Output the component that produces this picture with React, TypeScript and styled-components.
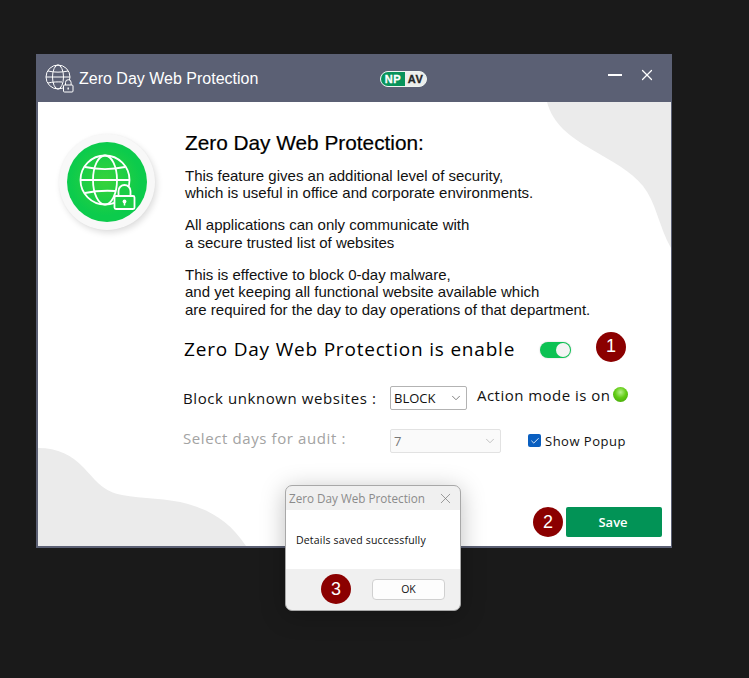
import React from "react";
import styled, { createGlobalStyle } from "styled-components";
import { ChevronDown, Check, X } from "lucide-react";

const Global = createGlobalStyle`
  html, body { margin: 0; padding: 0; background: #1a1a1a; }
  body { font-family: "Liberation Sans", Arial, sans-serif; }
`;

const Page = styled.div`
  position: relative;
  width: 749px;
  height: 678px;
  box-sizing: border-box;
  padding: 54px 0 0 36px;
  background: #1a1a1a;
  overflow: hidden;
`;

const Window = styled.section`
  width: 636px;
  height: 494px;
  box-sizing: border-box;
  border: solid #5b6074;
  border-width: 0 1px 2px 2px;
  display: flex;
  flex-direction: column;
  background: #fff;
`;

const TitleBar = styled.header`
  height: 48px;
  flex: none;
  margin-left: -2px;
  margin-right: -1px;
  background: #5b6074;
  display: flex;
  align-items: center;
  padding: 0 16px 0 9px;
  color: #fff;
`;

const TitleIcon = styled.svg`
  width: 29px;
  height: 29px;
  flex: none;
`;

const TitleText = styled.div`
  font-size: 16px;
  margin-left: 5px;
  margin-top: 2px;
  width: 301px;
  flex: none;
`;

const Logo = styled.div`
  display: flex;
  width: 47px;
  height: 16px;
  box-sizing: border-box;
  border: 1px solid #f0f5f1;
  border-radius: 8px;
  overflow: hidden;
  background: #eceeec;
  font-weight: 700;
  font-size: 11px;
  line-height: 14px;
  letter-spacing: 0.5px;
  -webkit-text-stroke: 0.3px currentColor;
  flex: none;
  margin-top: 2px;
`;

const LogoNP = styled.span`
  flex: 0 0 24px;
  background: #07935a;
  color: #fff;
  text-align: center;
`;

const LogoAV = styled.span`
  flex: 1;
  color: #262626;
  text-align: center;
`;

const WindowButtons = styled.div`
  margin-left: auto;
  display: flex;
  align-items: center;
  gap: 16px;
  margin-top: -7px;
`;

const MinLine = styled.span`
  display: block;
  width: 14px;
  height: 2px;
  background: #fff;
`;

const Content = styled.main`
  position: relative;
  flex: 1;
  display: flex;
  flex-direction: column;
  overflow: hidden;
`;

const Blob = styled.svg`
  position: absolute;
  fill: #ebebeb;
`;

const Intro = styled.div`
  position: relative;
  display: flex;
  padding: 29px 0 0 21px;
`;

const Badge = styled.div`
  width: 96px;
  height: 96px;
  margin-top: 3px;
  border-radius: 50%;
  background: #f8f8f8;
  box-shadow: 2px 3px 6px rgba(0, 0, 0, 0.13), 0 0 2px rgba(0, 0, 0, 0.04);
  display: flex;
  align-items: center;
  justify-content: center;
  flex: none;
`;

const GreenDisc = styled.div`
  width: 80px;
  height: 80px;
  border-radius: 50%;
  background: radial-gradient(circle at 48% 48%, #37d33a 0%, #0ccb4c 60%);
`;

const Copy = styled.div`
  margin-left: 30px;
  color: #111;
  font-size: 15px;
  line-height: 17.5px;
`;

const Heading = styled.h1`
  margin: 0 0 11.6px;
  font-size: 20.8px;
  line-height: 24px;
  font-weight: 400;
  color: #000;
  -webkit-text-stroke: 0.2px #000;
`;

const Para = styled.p`
  margin: 0 0 14.5px;
`;

const Controls = styled.div`
  position: relative;
  padding-left: 145px;
  font-family: "Open Sans", sans-serif;
`;

const EnableRow = styled.div`
  display: flex;
  align-items: center;
  height: 32px;
  margin-top: 1.9px;
`;

const EnableLabel = styled.div`
  font-size: 19px;
  letter-spacing: 0.8px;
  color: #000;
  margin: 0 0 2px 1px;
  width: 356px;
  flex: none;
`;

const Toggle = styled.div`
  width: 31px;
  height: 16px;
  border-radius: 8px;
  background: #0cc253;
  position: relative;
  flex: none;
  box-shadow: 0 0 2px rgba(0, 0, 0, 0.2);
  &::after {
    content: "";
    position: absolute;
    right: 1px;
    top: 1px;
    width: 14px;
    height: 14px;
    border-radius: 50%;
    background: #f4f4f4;
  }
`;

const NumberDot = styled.div`
  width: 30px;
  height: 30px;
  border-radius: 50%;
  background: #8b0000;
  color: #fff;
  font-family: "Liberation Sans", Arial, sans-serif;
  font-size: 18px;
  display: flex;
  align-items: center;
  justify-content: center;
  flex: none;
`;

const EnableDot = styled(NumberDot)`
  margin-left: 25px;
  margin-bottom: 7px;
`;

const BlockRow = styled.div`
  display: flex;
  align-items: center;
  height: 24px;
  margin-top: 19.5px;
`;

const AuditRow = styled.div`
  display: flex;
  align-items: center;
  height: 24px;
  margin-top: 19px;
`;

const FieldLabel = styled.div<{ $muted?: boolean }>`
  width: 207px;
  flex: none;
  font-size: 15px;
  letter-spacing: ${(p) => (p.$muted ? "0.6px" : "0.58px")};
  color: ${(p) => (p.$muted ? "#a3a3a3" : "#111")};
  position: relative;
  top: ${(p) => (p.$muted ? "-3px" : "0")};
`;

const SelectBox = styled.div<{ $w: number; $off?: boolean }>`
  width: ${(p) => p.$w}px;
  height: 24px;
  box-sizing: border-box;
  border: 1px solid ${(p) => (p.$off ? "#e2e2e2" : "#b3b3b3")};
  border-radius: 2px;
  display: flex;
  align-items: center;
  justify-content: space-between;
  padding: 0 3px 0 3px;
  font-size: 13px;
  color: ${(p) => (p.$off ? "#777" : "#111")};
  background: ${(p) => (p.$off ? "#fafafa" : "#fff")};
  flex: none;
`;

const ActionText = styled.div`
  margin-left: 10px;
  font-size: 15px;
  letter-spacing: 0.47px;
  color: #111;
  position: relative;
  top: -3px;
  white-space: nowrap;
`;

const Led = styled.span`
  width: 15px;
  height: 15px;
  border-radius: 50%;
  margin-left: 3px;
  position: relative;
  top: -3px;
  flex: none;
  background: radial-gradient(circle at 50% 35%, #b6f08a 0%, #62cc14 45%, #3f9f08 100%);
`;

const CheckBox = styled.span`
  width: 13px;
  height: 13px;
  border-radius: 2px;
  background: #0a5fc0;
  margin-left: 27px;
  display: flex;
  align-items: center;
  justify-content: center;
  flex: none;
`;

const CheckLabel = styled.span`
  margin-left: 4px;
  font-size: 13px;
  letter-spacing: 0.5px;
  color: #111;
  white-space: nowrap;
`;

const Footer = styled.div`
  position: relative;
  margin-top: auto;
  display: flex;
  justify-content: flex-end;
  align-items: center;
  gap: 3px;
  padding: 0 9px 9px 0;
`;

const SaveButton = styled.button`
  width: 96px;
  height: 30px;
  border: 0;
  border-radius: 2px;
  background: #029356;
  color: #fff;
  font-family: "Open Sans", sans-serif;
  font-size: 13px;
  font-weight: 600;
  padding: 0 2px 0 0;
`;

const Dialog = styled.div`
  position: absolute;
  left: 285px;
  top: 485px;
  width: 176px;
  height: 126px;
  box-sizing: border-box;
  border: 1px solid #a8a8a8;
  border-radius: 7px;
  background: #f0f0f0;
  box-shadow: 0 4px 24px rgba(0, 0, 0, 0.25);
  overflow: hidden;
  display: flex;
  flex-direction: column;
`;

const DialogTitle = styled.div`
  height: 24px;
  flex: none;
  display: flex;
  align-items: center;
  justify-content: space-between;
  padding: 0 6px 0 3px;
  font-family: "Open Sans", sans-serif;
  font-size: 11.7px;
  color: #8b8b8b;
`;

const DialogBody = styled.div`
  height: 59px;
  flex: none;
  box-sizing: border-box;
  background: #fff;
  padding-left: 10px;
  display: flex;
  align-items: center;
  padding-top: 1px;
  font-family: "Open Sans", sans-serif;
  font-size: 10.5px;
  letter-spacing: 0.18px;
  color: #111;
`;

const DialogFooter = styled.div`
  flex: 1;
  display: flex;
  align-items: center;
  padding: 0 0 1px 35px;
`;

const OkButton = styled.button`
  width: 73px;
  height: 21px;
  margin-left: 21px;
  border: 1px solid #d0d0d0;
  border-radius: 4px;
  background: #fdfdfd;
  color: #111;
  font-family: "Open Sans", sans-serif;
  font-size: 10.5px;
  padding: 0;
`;

const GlobeLock = () => (
  <svg width={80} height={80} viewBox="0 0 80 80" fill="none" stroke="#fff" strokeWidth={1.8}>
    <circle cx="38" cy="38" r="24.5" />
    <ellipse cx="38" cy="38" rx="12" ry="24.5" />
    <path d="M18 25c12 2.5 28 2.5 40 0M18 51c12-2.5 22-2.5 30-2" />
    <path d="M13.5 38h49" />
    <path d="M51.5 54v-5a6 6 0 0 1 12 0v5" fill="#1ccd45" />
    <rect x="47.5" y="54" width="20" height="13" rx="1.5" fill="#1ccd45" />
    <circle cx="57.5" cy="59.5" r="1.9" fill="#fff" stroke="none" />
    <path d="M57.5 60v3.5" strokeWidth="1.5" />
  </svg>
);

export default function App() {
  return (
    <Page>
      <Global />
      <Window>
        <TitleBar>
          <TitleIcon viewBox="0 0 29 29" fill="none" stroke="#fff" strokeWidth="1">
            <circle cx="13" cy="13" r="12" />
            <ellipse cx="13" cy="13" rx="5.5" ry="12" />
            <path d="M3 7c6 1.5 14 1.5 20 0M1 13h24M3 19c5-1.2 10-1.2 14-1" />
            <path d="M20.5 21v-2.5a2.8 2.8 0 0 1 5.6 0V21" fill="#5b6074" />
            <rect x="18.5" y="21" width="9.5" height="7" rx="1" fill="#5b6074" />
            <path d="M23.2 23.5v2" strokeWidth="1.4" />
          </TitleIcon>
          <TitleText>Zero Day Web Protection</TitleText>
          <Logo>
            <LogoNP>NP</LogoNP>
            <LogoAV>AV</LogoAV>
          </Logo>
          <WindowButtons>
            <MinLine />
            <X size={18} color="#fff" strokeWidth={1.6} />
          </WindowButtons>
        </TitleBar>
        <Content>
          <Blob style={{ right: 0, top: 0 }} width="124" height="146" viewBox="0 0 124 146">
            <path d="M0 0C6 22 22 34 44 47C66 60 84 69 96 84C109 100 112 125 124 146V0Z" />
          </Blob>
          <Blob style={{ left: 0, bottom: 0 }} width="208" height="98" viewBox="0 0 208 98">
            <path d="M0 0C20 0 34 7 46 20C58 33 66 44 84 47C104 51 130 50 150 56C174 63 192 74 208 98H0Z" />
          </Blob>
          <Intro>
            <Badge>
              <GreenDisc>
                <GlobeLock />
              </GreenDisc>
            </Badge>
            <Copy>
              <Heading>Zero Day Web Protection:</Heading>
              <Para>
                This feature gives an additional level of security,
                <br />
                which is useful in office and corporate environments.
              </Para>
              <Para>
                All applications can only communicate with
                <br />a secure trusted list of websites
              </Para>
              <Para>
                This is effective to block 0-day malware,
                <br />
                and yet keeping all functional website available which
                <br />
                are required for the day to day operations of that department.
              </Para>
            </Copy>
          </Intro>
          <Controls>
            <EnableRow>
              <EnableLabel>Zero Day Web Protection is enable</EnableLabel>
              <Toggle />
              <EnableDot>1</EnableDot>
            </EnableRow>
            <BlockRow>
              <FieldLabel>Block unknown websites :</FieldLabel>
              <SelectBox $w={77}>
                BLOCK
                <ChevronDown size={14} color="#666" strokeWidth={1.4} />
              </SelectBox>
              <ActionText>Action mode is on</ActionText>
              <Led />
            </BlockRow>
            <AuditRow>
              <FieldLabel $muted>Select days for audit :</FieldLabel>
              <SelectBox $w={111} $off>
                7
                <ChevronDown size={14} color="#b5b5b5" strokeWidth={1.4} />
              </SelectBox>
              <CheckBox>
                <Check size={10} color="#fff" strokeWidth={2} />
              </CheckBox>
              <CheckLabel>Show Popup</CheckLabel>
            </AuditRow>
          </Controls>
          <Footer>
            <NumberDot>2</NumberDot>
            <SaveButton>Save</SaveButton>
          </Footer>
        </Content>
      </Window>
      <Dialog>
        <DialogTitle>
          Zero Day Web Protection
          <X size={17} color="#777" strokeWidth={1} />
        </DialogTitle>
        <DialogBody>Details saved successfully</DialogBody>
        <DialogFooter>
          <NumberDot>3</NumberDot>
          <OkButton>OK</OkButton>
        </DialogFooter>
      </Dialog>
    </Page>
  );
}
